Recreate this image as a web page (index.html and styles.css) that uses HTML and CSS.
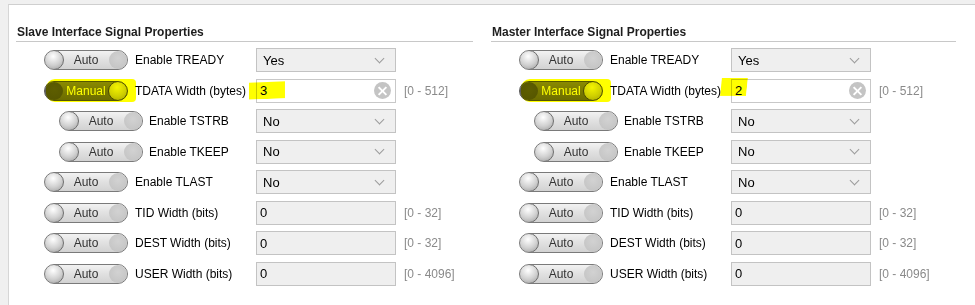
FILE: index.html
```html
<!DOCTYPE html>
<html lang="en">

<head>
    <meta charset="UTF-8">
    <meta name="viewport" content="width=device-width, initial-scale=1.0">
    <title>Interface Signal Properties</title>
    <link rel="stylesheet" href="styles.css">
</head>

<body>
    <div class="panel">
        <div class="group slave">
            <h2>Slave Interface Signal Properties</h2>

            <div class="row">
                <div class="ctrl">
                    <span class="toggle"><span class="knob"></span><span class="toggle-text">Auto</span><span class="socket"></span></span>
                    <span class="label">Enable TREADY</span>
                </div>
                <div class="field select"><span class="value">Yes</span><span class="chevron"></span></div>
            </div>

            <div class="row">
                <div class="ctrl">
                    <span class="mark-wrap">
                        <span class="toggle manual"><span class="socket"></span><span class="toggle-text">Manual</span><span class="knob"></span></span>
                        <span class="marker marker-toggle"></span>
                    </span>
                    <span class="label">TDATA Width (bytes)</span>
                </div>
                <div class="field edit mark-wrap">
                    <span class="value">3</span><span class="clear"></span>
                    <span class="marker marker-value"></span>
                </div>
                <span class="range">[0 - 512]</span>
            </div>

            <div class="row">
                <div class="ctrl indent">
                    <span class="toggle"><span class="knob"></span><span class="toggle-text">Auto</span><span class="socket"></span></span>
                    <span class="label">Enable TSTRB</span>
                </div>
                <div class="field select"><span class="value">No</span><span class="chevron"></span></div>
            </div>

            <div class="row">
                <div class="ctrl indent">
                    <span class="toggle"><span class="knob"></span><span class="toggle-text">Auto</span><span class="socket"></span></span>
                    <span class="label">Enable TKEEP</span>
                </div>
                <div class="field select"><span class="value">No</span><span class="chevron"></span></div>
            </div>

            <div class="row">
                <div class="ctrl">
                    <span class="toggle"><span class="knob"></span><span class="toggle-text">Auto</span><span class="socket"></span></span>
                    <span class="label">Enable TLAST</span>
                </div>
                <div class="field select"><span class="value">No</span><span class="chevron"></span></div>
            </div>

            <div class="row">
                <div class="ctrl">
                    <span class="toggle"><span class="knob"></span><span class="toggle-text">Auto</span><span class="socket"></span></span>
                    <span class="label">TID Width (bits)</span>
                </div>
                <div class="field"><span class="value">0</span></div>
                <span class="range">[0 - 32]</span>
            </div>

            <div class="row">
                <div class="ctrl">
                    <span class="toggle"><span class="knob"></span><span class="toggle-text">Auto</span><span class="socket"></span></span>
                    <span class="label">DEST Width (bits)</span>
                </div>
                <div class="field"><span class="value">0</span></div>
                <span class="range">[0 - 32]</span>
            </div>

            <div class="row">
                <div class="ctrl">
                    <span class="toggle"><span class="knob"></span><span class="toggle-text">Auto</span><span class="socket"></span></span>
                    <span class="label">USER Width (bits)</span>
                </div>
                <div class="field"><span class="value">0</span></div>
                <span class="range">[0 - 4096]</span>
            </div>
        </div>

        <div class="group master">
            <h2>Master Interface Signal Properties</h2>

            <div class="row">
                <div class="ctrl">
                    <span class="toggle"><span class="knob"></span><span class="toggle-text">Auto</span><span class="socket"></span></span>
                    <span class="label">Enable TREADY</span>
                </div>
                <div class="field select"><span class="value">Yes</span><span class="chevron"></span></div>
            </div>

            <div class="row">
                <div class="ctrl">
                    <span class="mark-wrap">
                        <span class="toggle manual"><span class="socket"></span><span class="toggle-text">Manual</span><span class="knob"></span></span>
                        <span class="marker marker-toggle"></span>
                    </span>
                    <span class="label">TDATA Width (bytes)</span>
                </div>
                <div class="field edit mark-wrap">
                    <span class="value">2</span><span class="clear"></span>
                    <span class="marker marker-value marker-two"></span>
                </div>
                <span class="range">[0 - 512]</span>
            </div>

            <div class="row">
                <div class="ctrl indent">
                    <span class="toggle"><span class="knob"></span><span class="toggle-text">Auto</span><span class="socket"></span></span>
                    <span class="label">Enable TSTRB</span>
                </div>
                <div class="field select"><span class="value">No</span><span class="chevron"></span></div>
            </div>

            <div class="row">
                <div class="ctrl indent">
                    <span class="toggle"><span class="knob"></span><span class="toggle-text">Auto</span><span class="socket"></span></span>
                    <span class="label">Enable TKEEP</span>
                </div>
                <div class="field select"><span class="value">No</span><span class="chevron"></span></div>
            </div>

            <div class="row">
                <div class="ctrl">
                    <span class="toggle"><span class="knob"></span><span class="toggle-text">Auto</span><span class="socket"></span></span>
                    <span class="label">Enable TLAST</span>
                </div>
                <div class="field select"><span class="value">No</span><span class="chevron"></span></div>
            </div>

            <div class="row">
                <div class="ctrl">
                    <span class="toggle"><span class="knob"></span><span class="toggle-text">Auto</span><span class="socket"></span></span>
                    <span class="label">TID Width (bits)</span>
                </div>
                <div class="field"><span class="value">0</span></div>
                <span class="range">[0 - 32]</span>
            </div>

            <div class="row">
                <div class="ctrl">
                    <span class="toggle"><span class="knob"></span><span class="toggle-text">Auto</span><span class="socket"></span></span>
                    <span class="label">DEST Width (bits)</span>
                </div>
                <div class="field"><span class="value">0</span></div>
                <span class="range">[0 - 32]</span>
            </div>

            <div class="row">
                <div class="ctrl">
                    <span class="toggle"><span class="knob"></span><span class="toggle-text">Auto</span><span class="socket"></span></span>
                    <span class="label">USER Width (bits)</span>
                </div>
                <div class="field"><span class="value">0</span></div>
                <span class="range">[0 - 4096]</span>
            </div>
        </div>
    </div>
</body>

</html>
```

FILE: styles.css
```css
html,
body {
    height: 100%;
}

body {
    margin: 0;
    background-color: #f0f0f0;
    font-family: "Liberation Sans", Arial, sans-serif;
    font-size: 12px;
    color: #000;
    overflow: hidden;
}

.panel {
    box-sizing: border-box;
    height: calc(100% - 4px);
    margin: 4px 0 0 8px;
    padding: 20px 0 0 7px;
    background: #fff;
    border-top: 1px solid #cfcfcf;
    border-left: 1px solid #d6d6d6;
    display: flex;
    gap: 18px;
}

.group.slave {
    width: 457px;
}

.group.master {
    width: 465px;
}

h2 {
    margin: 0 0 6px;
    padding: 0 0 2px 1px;
    font-size: 12px;
    line-height: 14px;
    font-weight: bold;
    color: #1e1e1e;
    border-bottom: 1px solid #c8c8c8;
}

.row {
    display: flex;
    align-items: center;
    height: 24px;
    margin-bottom: 6.5px;
}

.ctrl {
    box-sizing: border-box;
    width: 240px;
    padding-left: 28px;
    display: flex;
    align-items: center;
    gap: 7px;
}

.ctrl.indent {
    padding-left: 43px;
    gap: 6px;
}

/* auto / manual switch */
.toggle {
    box-sizing: border-box;
    width: 84px;
    height: 20px;
    border: 1px solid #7a7a7a;
    border-radius: 10px;
    background: linear-gradient(#f2f2f2, #e2e2e2 45%, #d2d2d2);
    display: flex;
    align-items: center;
    overflow: hidden;
    flex-shrink: 0;
}

.knob {
    box-sizing: border-box;
    width: 20px;
    height: 20px;
    margin: -1px;
    border: 1px solid #6e6e6e;
    border-radius: 50%;
    background: radial-gradient(circle at 45% 30%, #ffffff, #d0d0d0 55%, #9a9a9a);
    flex-shrink: 0;
}

.socket {
    width: 18px;
    height: 18px;
    border-radius: 50%;
    background: radial-gradient(circle at 50% 40%, #d2d2d2, #c6c6c6 70%, #bdbdbd);
    flex-shrink: 0;
}

.toggle-text {
    flex: 1;
    text-align: center;
    color: #333;
    font-size: 12px;
    line-height: 18px;
}

.toggle.manual {
    background: linear-gradient(#8a8a8a, #7a7a7a 50%, #6c6c6c);
    border-color: #555;
}

.toggle.manual .socket {
    background: radial-gradient(circle at 50% 40%, #5e5e5e, #575757 70%, #505050);
}

.toggle.manual .toggle-text {
    color: #fff;
}

.toggle.manual .knob {
    border-color: #4a4a4a;
    background: radial-gradient(circle at 45% 30%, #f4f4f4, #cfcfcf 55%, #a4a4a4);
}

.label {
    white-space: nowrap;
}

/* inputs */
.field {
    box-sizing: border-box;
    width: 140px;
    height: 24px;
    padding: 0 4px 0 3px;
    border: 1px solid #c3c3c3;
    background: #efefef;
    display: flex;
    align-items: center;
    font-size: 13px;
    flex-shrink: 0;
}

.field.select {
    padding-left: 6px;
}

.field.edit {
    background: #fff;
    border-color: #c8c8c8;
}

.value {
    flex: 1;
}

.chevron {
    width: 6px;
    height: 6px;
    margin: 0 8px 4px 0;
    border-right: 1.5px solid #9c9c9c;
    border-bottom: 1.5px solid #9c9c9c;
    transform: rotate(45deg);
}

.clear {
    position: relative;
    width: 17px;
    height: 17px;
    margin-right: 0;
    border-radius: 50%;
    background: #c4c4c4;
}

.clear::before,
.clear::after {
    content: "";
    position: absolute;
    left: 3px;
    top: 7.5px;
    width: 11px;
    height: 2px;
    background: #fff;
    transform: rotate(45deg);
}

.clear::after {
    transform: rotate(-45deg);
}

.range {
    margin-left: 8px;
    color: #8a8a8a;
    white-space: nowrap;
}

/* highlighter marks */
.mark-wrap {
    position: relative;
    display: flex;
}

.marker {
    position: absolute;
    background: #ffff00;
    mix-blend-mode: multiply;
    pointer-events: none;
}

.marker-toggle {
    left: 2px;
    right: -8px;
    top: -2px;
    bottom: -1px;
    border-radius: 9px 4px 4px 9px;
}

.marker-value {
    left: -8px;
    top: 2px;
    width: 36px;
    height: 17px;
    transform: skewY(-2deg);
}

.marker-two {
    left: -11px;
    top: -2px;
    width: 26px;
    height: 18px;
    transform: skewX(-6deg);
}
```
